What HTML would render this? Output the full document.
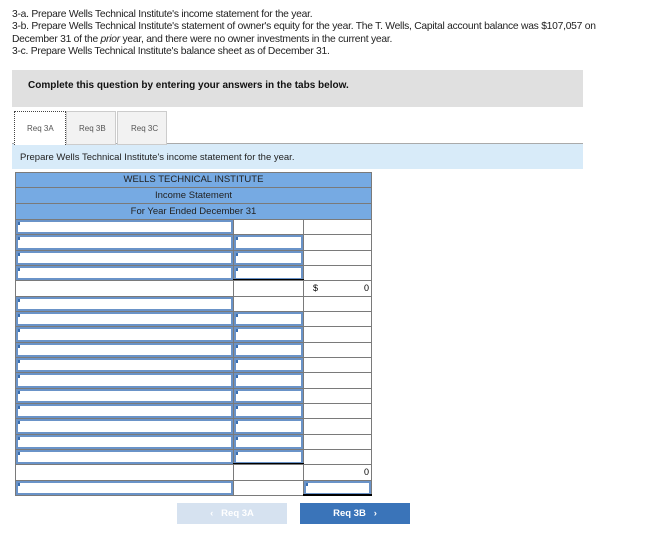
<!DOCTYPE html>
<html><head><style>
body{margin:0;width:648px;height:540px;background:#fff;font-family:"Liberation Sans",sans-serif;position:relative;overflow:hidden}
.q{position:absolute;left:12px;top:9px;font-size:10.3px;line-height:12.3px;color:#222;letter-spacing:-0.25px}
.a{position:absolute}
.c{position:absolute;box-sizing:border-box;border:1px solid #7a7a7a;background:#fff}
.in{position:absolute;box-sizing:border-box;border:2px solid #6a93c8;background:#fff}
.in:before{content:"";position:absolute;left:0;top:0;width:2px;height:3px;background:#3a6fb0}
.h{position:absolute;left:15px;width:357px;box-sizing:border-box;border:1px solid #7a7a7a;background:#76aae3;font-size:9.5px;text-align:center;color:#222}
</style></head><body>
<div class="q">3-a. Prepare Wells Technical Institute's income statement for the year.<br>3-b. Prepare Wells Technical Institute's statement of owner's equity for the year. The T. Wells, Capital account balance was $107,057 on<br>December 31 of the <i>prior</i> year, and there were no owner investments in the current year.<br>3-c. Prepare Wells Technical Institute's balance sheet as of December 31.</div>
<div class="a" style="left:12px;top:70px;width:571px;height:37px;background:#e0e0e0"></div>
<div class="a" style="left:28px;top:80px;font-size:10px;font-weight:bold;color:#111">Complete this question by entering your answers in the tabs below.</div>
<div class="a" style="left:12px;top:143px;width:571px;height:25px;background:#d8ebf9;border-top:1px solid #aaa"></div>
<div class="a" style="left:14px;top:111px;width:50px;height:33px;background:#fff;border:1px dotted #444;border-bottom:none"></div>
<div class="a" style="left:66px;top:111px;width:48px;height:32px;background:#f2f2f2;border:1px solid #ccc"></div>
<div class="a" style="left:117px;top:111px;width:48px;height:32px;background:#f2f2f2;border:1px solid #ccc"></div>
<div class="a" style="left:27px;top:124px;font-size:8px;color:#555">Req 3A</div>
<div class="a" style="left:79px;top:124px;font-size:8px;color:#555">Req 3B</div>
<div class="a" style="left:131px;top:124px;font-size:8px;color:#555">Req 3C</div>
<div class="a" style="left:20px;top:152px;font-size:9.5px;color:#222">Prepare Wells Technical Institute's income statement for the year.</div>
<div class="h" style="top:172px;height:16px;line-height:14px">WELLS TECHNICAL INSTITUTE</div>
<div class="h" style="top:187px;height:17px;line-height:15px">Income Statement</div>
<div class="h" style="top:203px;height:17px;line-height:15px">For Year Ended December 31</div>
<div id="t"></div>
<div class="a" style="left:177px;top:503px;width:110px;height:21px;background:#d6e2f0;color:#fff;font-size:9.5px;font-weight:bold;text-align:center;line-height:21px">&lsaquo;&nbsp;&nbsp; Req 3A</div>
<div class="a" style="left:300px;top:503px;width:110px;height:21px;background:#3a74b9;color:#fff;font-size:9.5px;font-weight:bold;text-align:center;line-height:21px">Req 3B &nbsp;&nbsp;&rsaquo;</div>
<script>
var t=document.getElementById('t'),h='';
var rows=[];
for(var i=0;i<18;i++){var r={c1:1,c2:1,c3:0};
if(i==0)r.c2=0;if(i==4||i==16){r.c1=0;r.c2=0}if(i==5)r.c2=0;if(i==17){r.c2=0;r.c3=1}rows.push(r)}
for(var i=0;i<18;i++){var y=Math.round(219+i*15.33),y2=Math.round(219+(i+1)*15.33),hh=y2-y+1,r=rows[i];
h+='<div class="c" style="left:15px;top:'+y+'px;width:219px;height:'+hh+'px"></div>';
h+='<div class="c" style="left:233px;top:'+y+'px;width:71px;height:'+hh+'px"></div>';
h+='<div class="c" style="left:303px;top:'+y+'px;width:69px;height:'+hh+'px"></div>';
if(r.c1)h+='<div class="in" style="left:16px;top:'+(y+1)+'px;width:217px;height:'+(hh-2)+'px"></div>';
if(r.c2)h+='<div class="in" style="left:234px;top:'+(y+1)+'px;width:69px;height:'+(hh-2)+'px"></div>';
if(r.c3)h+='<div class="in" style="left:304px;top:'+(y+1)+'px;width:67px;height:'+(hh-2)+'px"></div><div class="a" style="left:303px;top:'+(y+hh-2)+'px;width:69px;height:2px;background:#000"></div>';
if(i==3||i==15)h+='<div class="a" style="left:233px;top:'+(y+hh-2)+'px;width:71px;height:2px;background:#000"></div>';
if(i==15)h+='<div class="a" style="left:303px;top:'+(y+hh+15)+'px;width:69px;height:1px;background:#000"></div>';
if(i==4)h+='<div class="a" style="left:313px;top:'+(y+3)+'px;font-size:9px">$</div><div class="a" style="left:364px;top:'+(y+3)+'px;font-size:9px">0</div>';
if(i==16)h+='<div class="a" style="left:364px;top:'+(y+3)+'px;font-size:9px">0</div>';}
t.innerHTML=h;
</script>
</body></html>
